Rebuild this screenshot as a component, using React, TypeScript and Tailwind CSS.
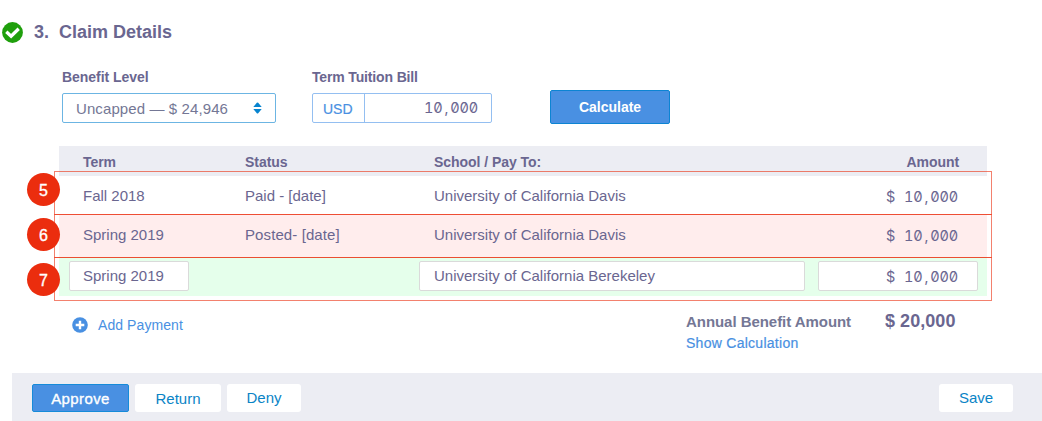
import type { ReactNode } from "react";

const mono =
  "font-['Inter','Liberation_Mono',monospace] font-normal text-[14.5px] tracking-[-0.15px] [font-feature-settings:'tnum','zero'] text-[#6a6690]";
const grid = "grid grid-cols-[162px_189px_1fr_auto] pl-6";

function TenThousand() {
  return (
    <>
      10<span className="mr-[2px] ml-[2px]">,</span>000
    </>
  );
}

function DollarAmount() {
  return (
    <>
      <span className="mr-[5px]">$</span> <TenThousand />
    </>
  );
}

function Callout({ n, className }: { n: number; className: string }) {
  return (
    <div
      className={`absolute left-[27px] flex h-[33px] w-[33px] items-center justify-center rounded-full bg-[#eb2d0e] text-[16px] text-white [-webkit-text-stroke:0.35px] ${className}`}
    >
      <span className="pt-0.5">{n}</span>
    </div>
  );
}

function FooterButton({ children, className }: { children: ReactNode; className: string }) {
  return (
    <button className={`h-7 rounded-[3px] bg-white text-[15px] leading-7 text-[#0a84c6] ${className}`}>
      {children}
    </button>
  );
}

export default function App() {
  return (
    <main className="relative flex h-[421px] w-[1042px] flex-col overflow-hidden bg-white font-['Liberation_Sans',Arial,sans-serif] text-[15px] text-[#6a6690]">
      <header className="flex h-[64px] items-center pl-[2px]">
        <svg className="h-[21px] w-[21px]" viewBox="0 0 21 21">
          <circle cx="10.5" cy="10.5" r="10.4" fill="#1f9f0c" />
          <path d="M4.3 9.8 9.1 14.2 16.7 6.8" fill="none" stroke="#fff" strokeWidth="3.3" />
        </svg>
        <h2 className="flex pl-[11px] text-[18px] leading-6 font-bold">
          <span className="w-[25px]">3.</span>
          <span>Claim Details</span>
        </h2>
      </header>

      <section className="flex h-[82px] pl-[62px]">
        <div className="w-[250px] pt-1">
          <label className="block h-[25px] text-[14px] leading-[19px] font-bold tracking-[-0.05px]">Benefit Level</label>
          <div className="flex h-[30px] w-[214px] items-center justify-between rounded-[2px] border border-[#6cb5e3] pr-[13px] pl-[13px] text-[#747795]">
            <span className="pt-[2px] tracking-[0.1px]">Uncapped — $ 24,946</span>
            <svg className="h-3 w-[9px]" viewBox="0 0 9 12" fill="#0784cf">
              <path d="M.3 5 3.8.8Q4.5.2 5.2.8L8.7 5ZM.3 7h8.4L5.2 11.2Q4.5 11.8 3.8 11.2Z" />
            </svg>
          </div>
        </div>
        <div className="w-[238px] pt-1">
          <label className="block h-[25px] text-[14px] leading-[19px] font-bold tracking-[-0.15px]">Term Tuition Bill</label>
          <div className="flex h-[30px] w-[180px] rounded-[2px] border border-[#94bff1]">
            <span className="w-[52px] border-r border-[#94bff1] pl-[10px] text-[14px] leading-[31px] text-[#4990e2] [-webkit-text-stroke:0.2px]">USD</span>
            <span className={`flex-1 pr-[13px] text-right leading-[28px] ${mono}`}><TenThousand /></span>
          </div>
        </div>
        <button className="mt-[26px] h-[34px] w-[120px] rounded-[2px] border border-[#0c84d3] bg-[#4990e2] text-[14px] font-bold text-white">
          Calculate
        </button>
      </section>

      <section className="ml-[59px] w-[928px]">
        <div className={`${grid} h-[30px] bg-[#ecedf3] pr-7 text-[14px] leading-[32px] font-bold tracking-[-0.05px]`}>
          <span>Term</span>
          <span>Status</span>
          <span>School / Pay To:</span>
          <span>Amount</span>
        </div>
        <div className={`${grid} h-[39px] pr-[29px] leading-[40px]`}>
          <span>Fall 2018</span>
          <span>Paid - [date]</span>
          <span>University of California Davis</span>
          <span className={`leading-[41px] ${mono}`}><DollarAmount /></span>
        </div>
        <div className={`${grid} h-[42px] bg-[#ffeded] pr-[29px] leading-[40px]`}>
          <span>Spring 2019</span>
          <span className="tracking-[0.1px]">Posted- [date]</span>
          <span>University of California Davis</span>
          <span className={`leading-[41px] ${mono}`}><DollarAmount /></span>
        </div>
        <div className="flex h-[39px] bg-[#e5ffeb] pt-1 pl-[10px] leading-[28px]">
          <div className="mr-[230px] h-[30px] w-[120px] rounded-[2px] border border-[#dadada] bg-white pl-[13px]">Spring 2019</div>
          <div className="mr-[13px] h-[30px] w-[386px] rounded-[2px] border border-[#dadada] bg-white pl-[14px]">
            University of California Berekeley
          </div>
          <div className={`h-[30px] w-[160px] rounded-[2px] border border-[#dadada] bg-white pr-[19px] text-right leading-[29px] ${mono}`}>
            <DollarAmount />
          </div>
        </div>
      </section>

      <section className="flex h-[77px] pt-[15px] pl-[72px]">
        <div className="flex h-7 w-[614px] items-center text-[14px] tracking-[0.08px] text-[#4990e2]">
          <svg className="mr-[10px] h-4 w-4" viewBox="0 0 16 16">
            <circle cx="8" cy="8" r="7.8" fill="#4990e2" />
            <path d="M8 3.7v8.6M3.7 8h8.6" stroke="#fff" strokeWidth="2.4" />
          </svg>
          <span>Add Payment</span>
        </div>
        <div className="w-[199px]">
          <div className="text-[15px] leading-[22px] font-bold tracking-[-0.05px] text-[#747795]">Annual Benefit Amount</div>
          <div className="text-[14px] leading-[20px] tracking-[0.27px] text-[#4990e2] [-webkit-text-stroke:0.2px]">Show Calculation</div>
        </div>
        <strong className="text-[18px] leading-[20px] tracking-[0.05px]">$ 20,000</strong>
      </section>

      <footer className="ml-3 flex h-12 items-start bg-[#ecedf3] pt-[11px] pr-[29px] pl-5">
        <button className="mr-[6px] h-7 w-[97px] rounded-[2px] border border-[#168bd9] bg-[#4990e2] text-[15px] leading-[28px] tracking-[0.4px] text-white [-webkit-text-stroke:0.35px]">
          Approve
        </button>
        <FooterButton className="mr-[6px] w-[86px] pt-px">Return</FooterButton>
        <FooterButton className="w-[74px]">Deny</FooterButton>
        <FooterButton className="ml-auto w-[74px]">Save</FooterButton>
      </footer>

      <div className="absolute top-[171px] left-[54px] h-[44px] w-[938px] border border-[#eb2d0e]/60" />
      <div className="absolute top-[214px] left-[54px] h-[44px] w-[938px] border border-[#eb2d0e]/60" />
      <div className="absolute top-[257px] left-[54px] h-[44px] w-[938px] border border-[#eb2d0e]/60" />
      <Callout n={5} className="top-[173px]" />
      <Callout n={6} className="top-[218px]" />
      <Callout n={7} className="top-[263px]" />
    </main>
  );
}
